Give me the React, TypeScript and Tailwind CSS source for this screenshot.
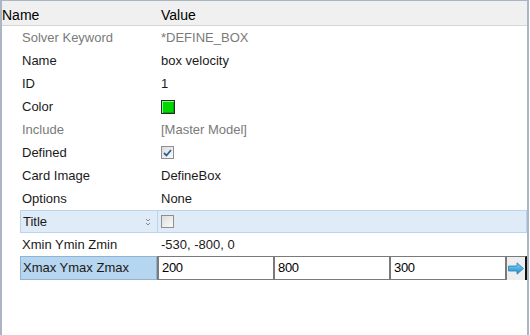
export default function App() {
  const rows: { label: string; value: React.ReactNode; muted?: boolean }[] = [
    { label: "Solver Keyword", value: "*DEFINE_BOX", muted: true },
    { label: "Name", value: "box velocity" },
    { label: "ID", value: "1" },
    {
      label: "Color",
      value: (
        <span className="block w-[14px] h-[14px] border border-[#2a2a2a] bg-[#00d800] shadow-[inset_1px_1px_0_#7dff7d,inset_-1px_-1px_0_#00a800]" />
      ),
    },
    { label: "Include", value: "[Master Model]", muted: true },
    { label: "Defined", value: <Checkbox checked /> },
    { label: "Card Image", value: "DefineBox" },
    { label: "Options", value: "None" },
  ];

  return (
    <div className="w-[530px] h-[335px] bg-white font-['Liberation_Sans',Arial,sans-serif] overflow-hidden">
      <div className="w-[529px] h-[335px] border-l-[2px] border-r-[2px] border-t border-[#aab6c4] flex flex-col">
        {/* header */}
        <div className="h-[25px] flex items-center pt-[4px] bg-[#f0f0f0] border-b border-[#d5d5d5] text-[14px] text-black shrink-0">
          <div className="w-[159px]">Name</div>
          <div>Value</div>
        </div>

        {rows.map((r) => (
          <div key={r.label} className={`h-[23px] flex items-center text-[13px] ${r.muted ? "text-[#7a7a7a]" : "text-[#1a1a1a]"}`}>
            <div className="w-[159px] pl-[20px]">{r.label}</div>
            <div className="flex items-center">{r.value}</div>
          </div>
        ))}

        {/* Title row (selected) */}
        <div className="h-[23px] flex ml-[18px] text-[13px] text-[#1a1a1a]">
          <div className="w-[138px] flex items-center justify-between pl-[2px] pr-[6px] bg-[#dfebf6] border border-[#b9d4ee]">
            <span>Title</span>
            <svg width="6" height="8" viewBox="0 0 6 8">
              <path d="M1 1 L3 3 L5 1 M1 5 L3 7 L5 5" stroke="#8a8a8a" strokeWidth="1" fill="none" />
            </svg>
          </div>
          <div className="flex-1 flex items-center pl-[3px] bg-[#dfebf6] border border-l-0 border-[#b9d4ee]">
            <Checkbox />
          </div>
        </div>

        <div className="h-[23px] flex items-center text-[13px] text-[#1a1a1a]">
          <div className="w-[159px] pl-[20px]">Xmin Ymin Zmin</div>
          <div>-530, -800, 0</div>
        </div>

        {/* Xmax row (editing) */}
        <div className="h-[24px] flex ml-[18px] text-[13px]">
          <div className="w-[137px] flex items-center pl-[2px] bg-[#b6d5ee] border border-[#8fb3d6] text-[#1a1a1a]">
            Xmax Ymax Zmax
          </div>
          {["200", "800", "300"].map((v) => (
            <div
              key={v}
              className="w-[116px] flex items-center pl-[3px] border-t border-l-[2px] border-b border-[#7a7a7a] text-black text-[13px] tracking-[-0.3px]"
            >
              {v}
            </div>
          ))}
          <div className="w-[22px] flex items-center justify-center border-l-[2px] border-t border-[#7a7a7a] border-r-[2px] border-r-[#111] bg-[#eeeeee]">
            <svg width="16" height="13" viewBox="0 0 16 13">
              <defs>
                <linearGradient id="ar" x1="0" y1="0" x2="0" y2="1">
                  <stop offset="0" stopColor="#7fd3f5" />
                  <stop offset="1" stopColor="#1e8ccc" />
                </linearGradient>
              </defs>
              <path d="M0.5 4 H9 V0.8 L15.5 6.5 L9 12.2 V9 H0.5 Z" fill="url(#ar)" stroke="#2b7fb8" strokeWidth="0.8" />
            </svg>
          </div>
        </div>
      </div>
    </div>
  );
}

function Checkbox({ checked }: { checked?: boolean }) {
  return (
    <span className="w-[13px] h-[13px] border border-[#8e8f8f] bg-gradient-to-br from-[#dcdcdc] to-[#fbfbfb] flex items-center justify-center">
      {checked && (
        <svg width="9" height="8" viewBox="0 0 9 8">
          <path d="M1 4 L3.5 6.5 L8 1" stroke="#2b5f9a" strokeWidth="1.8" fill="none" />
        </svg>
      )}
    </span>
  );
}
